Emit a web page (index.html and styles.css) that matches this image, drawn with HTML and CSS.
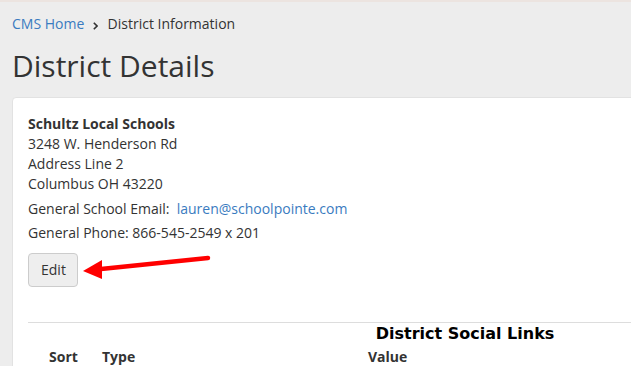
FILE: index.html
```html
<!DOCTYPE html>
<html lang="en">
<head>
    <meta charset="UTF-8">
    <meta name="viewport" content="width=device-width, initial-scale=1.0">
    <title>District Details</title>
    <link rel="stylesheet" href="styles.css">
</head>
<body>
    <div class="page">
        <nav class="breadcrumb">
            <a href="#">CMS Home</a>
            <svg class="sep" width="5" height="8" viewBox="0 0 5 8">
                <polyline points="0.8,0.8 4,4 0.8,7.2" fill="none" stroke="#333" stroke-width="1.6"/>
            </svg>
            <span>District Information</span>
        </nav>

        <h1>District Details</h1>

        <div class="card">
            <div class="address">
                <strong>Schultz Local Schools</strong><br>
                3248 W. Henderson Rd<br>
                Address Line 2<br>
                Columbus OH 43220
            </div>
            <p class="contact">General School Email:&nbsp; <a href="#">lauren@schoolpointe.com</a></p>
            <p class="contact">General Phone: 866-545-2549 x 201</p>

            <button type="button" class="btn">Edit</button>

            <!-- red pointer arrow drawn over the card -->
            <svg class="arrow" width="135" height="30" viewBox="0 0 135 30">
                <line x1="127" y1="4" x2="20" y2="15" stroke="#f00" stroke-width="4.5" stroke-linecap="round"/>
                <polygon points="2,17 21,6 21,25" fill="#f00"/>
            </svg>

            <hr>

            <table class="links">
                <caption>District Social Links</caption>
                <thead>
                    <tr>
                        <th class="col-sort">Sort</th>
                        <th class="col-type">Type</th>
                        <th>Value</th>
                    </tr>
                </thead>
            </table>
        </div>
    </div>
</body>
</html>
```

FILE: styles.css
```css
* {
    margin: 0;
    padding: 0;
    box-sizing: border-box;
}

body {
    font-family: "Open Sans", Arial, sans-serif;
    font-size: 14px;
    line-height: 20px;
    color: #333;
    background-color: #ededed;
    border-top: 2px solid #ece4e0;
    overflow: hidden;
}

a {
    color: #3a7bc0;
    text-decoration: none;
}

.page {
    padding: 0 0 0 12px;
}

.breadcrumb {
    padding-top: 12px;
    height: 30px;
}

.breadcrumb .sep {
    margin: 0 6px 0 5px;
    vertical-align: -1px;
}

h1 {
    font-size: 30px;
    font-weight: normal;
    line-height: 40px;
    margin: 14px 0 11px;
}

.card {
    position: relative;
    width: 906px;
    background-color: #fff;
    border: 1px solid #e2e2e2;
    border-radius: 4px;
    padding: 16px 15px 20px;
}

.address {
    margin-bottom: 5px;
}

.contact {
    margin-bottom: 4px;
}

.btn {
    margin-top: 6px;
    font-family: inherit;
    font-size: 14px;
    line-height: 20px;
    color: #333;
    background-color: #eee;
    border: 1px solid #ccc;
    border-radius: 4px;
    padding: 6px 12px;
    width: 50px;
}

.arrow {
    position: absolute;
    left: 68px;
    top: 156px;
}

hr {
    border: none;
    border-top: 1px solid #ddd;
    margin: 35px -30px 0 0;
}

.links {
    width: 100%;
    border-collapse: collapse;
}

.links caption {
    font-family: "DejaVu Sans", Verdana, sans-serif;
    font-weight: bold;
    font-size: 16px;
    color: #000;
    line-height: 22px;
}

.links th {
    text-align: left;
    padding: 2px 0 0;
}

.col-sort {
    width: 74px;
    padding-left: 21px !important;
}

.col-type {
    width: 266px;
}
```
